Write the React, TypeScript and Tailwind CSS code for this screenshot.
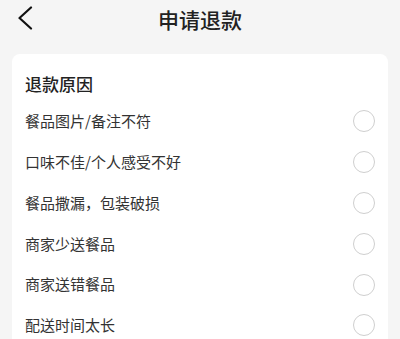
const reasons = [
  "餐品图片/备注不符",
  "口味不佳/个人感受不好",
  "餐品撒漏，包装破损",
  "商家少送餐品",
  "商家送错餐品",
  "配送时间太长",
];

export default function App() {
  return (
    <div
      className="w-[400px] h-[339px] overflow-hidden bg-[#f5f5f5] text-[#333]"
      style={{ fontFamily: '"Noto Sans CJK SC", "Noto Sans", sans-serif' }}
    >
      {/* Header */}
      <div className="relative h-[38px] flex items-center justify-center">
        <button className="absolute left-[16px] top-[6px] w-[18px] h-[24px] flex items-center justify-center">
          <svg width="18" height="24" viewBox="0 0 18 24" fill="none">
            <path d="M15 1.5L3.5 12L15 22.5" stroke="#111" strokeWidth="2.2" strokeLinecap="round" strokeLinejoin="round" />
          </svg>
        </button>
        <h1 className="text-[21px] leading-[28px] font-medium text-[#222]">申请退款</h1>
      </div>

      {/* Card */}
      <div className="mx-[12px] mt-[16px] bg-white rounded-[8px] pt-[16px] pl-[13px] pr-[13px]">
        <div className="text-[17px] leading-[27px] font-medium text-[#222]">退款原因</div>
        <ul className="mt-[4px]">
          {reasons.map((r) => (
            <li key={r} className="h-[40.8px] flex items-center justify-between">
              <span className="text-[15px] text-[#333]">{r}</span>
              <span className="w-[22px] h-[22px] rounded-full border border-[#cfcfcf]" />
            </li>
          ))}
        </ul>
      </div>
    </div>
  );
}
